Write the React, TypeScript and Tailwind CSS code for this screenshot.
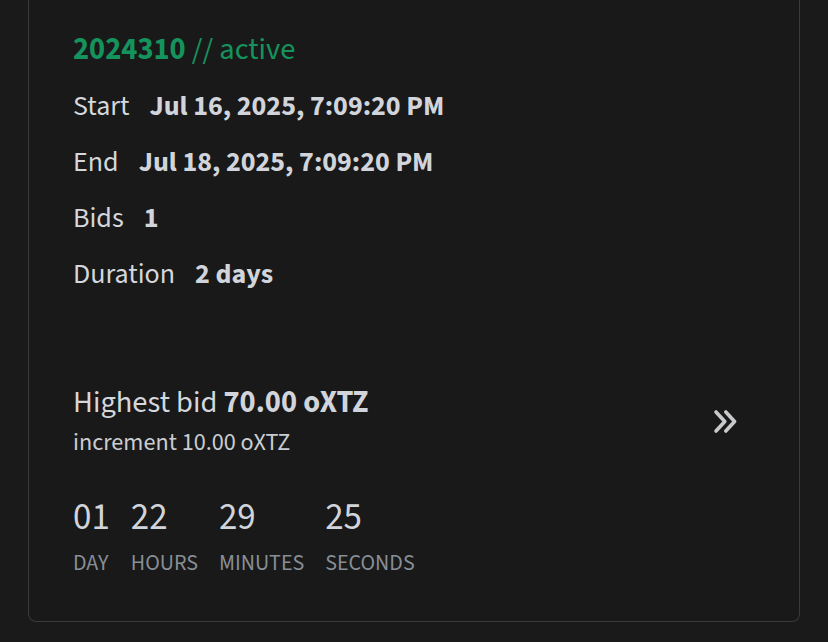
const rows = [
  { label: 'Start', value: 'Jul 16, 2025, 7:09:20 PM' },
  { label: 'End', value: 'Jul 18, 2025, 7:09:20 PM' },
  { label: 'Bids', value: '1' },
  { label: 'Duration', value: '2 days' },
];

const countdown = [
  { value: '01', unit: 'DAY' },
  { value: '22', unit: 'HOURS' },
  { value: '29', unit: 'MINUTES' },
  { value: '25', unit: 'SECONDS' },
];

function DoubleChevron() {
  return (
    <svg width="27" height="25" viewBox="0 0 27 25" fill="none" stroke="#c8c9cb" strokeWidth="3.6" strokeLinecap="round" strokeLinejoin="round">
      <path d="M4 3 L12.8 12.5 L4 22" />
      <path d="M13.8 3 L22.6 12.5 L13.8 22" />
    </svg>
  );
}

export default function App() {
  return (
    <div
      className="min-h-screen bg-[#1a1a1a] px-[28px] pb-[21px]"
      style={{ fontFamily: '"Source Sans 3", "Source Sans Pro", Lato, "Noto Sans", sans-serif' }}
    >
      <div className="rounded-b-lg border border-t-0 border-[#3a3b3d] bg-[#191919] pl-[44px] pr-[60px] pt-[31px] pb-[44px]">
        {/* Title */}
        <div className="text-[30.5px] leading-[38px] text-[#15935d]">
          <span className="font-bold">2024310</span> // active
        </div>

        {/* Details */}
        <div className="mt-[19px] flex flex-col gap-[20px]">
          {rows.map((r) => (
            <div key={r.label} className="flex items-baseline text-[28px] leading-[36px]">
              <span className="text-[#d4d7db]">{r.label}</span>
              <span className="ml-[20px] font-bold text-[#d1d5db]">{r.value}</span>
            </div>
          ))}
        </div>

        {/* Bid */}
        <div className="mt-[93px] flex items-center justify-between">
          <div>
            <div className="text-[30.5px] leading-[36px] text-[#d4d7db]">
              Highest bid <span className="font-bold text-[#d1d5db]">70.00 oXTZ</span>
            </div>
            <div className="mt-[8px] text-[24.2px] leading-[28px] text-[#c9cdd2]">increment 10.00 oXTZ</div>
          </div>
          <DoubleChevron />
        </div>

        {/* Countdown */}
        <div className="mt-[39px] flex gap-[21px]">
          {countdown.map((c) => (
            <div key={c.unit} className="flex flex-col">
              <span className="text-[37px] leading-[44px] text-[#d1d5db]">{c.value}</span>
              <span className="mt-[9px] text-[22px] leading-[28px] text-[#878e96]">{c.unit}</span>
            </div>
          ))}
        </div>
      </div>
    </div>
  );
}
